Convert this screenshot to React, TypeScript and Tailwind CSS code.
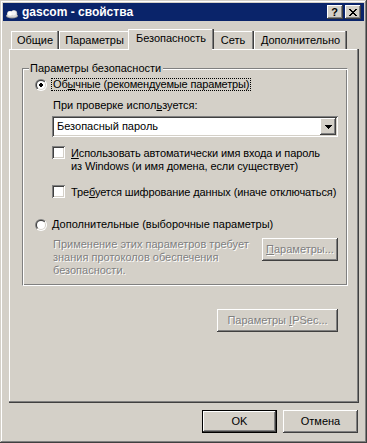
import React from "react";

const RAISED =
  "shadow-[inset_-1px_-1px_#404040,inset_1px_1px_#ffffff,inset_-2px_-2px_#808080,inset_2px_2px_#d4d0c8]";
const SUNKEN =
  "shadow-[inset_1px_1px_#808080,inset_-1px_-1px_#ffffff,inset_2px_2px_#404040,inset_-2px_-2px_#d4d0c8]";
const DISABLED = "text-[#808080] [text-shadow:1px_1px_0_#ffffff]";

const TABS = [
  { label: "Общие", w: "w-[48px]" },
  { label: "Параметры", w: "w-[71px]" },
  { label: "Безопасность", w: "w-[86px]", active: true },
  { label: "Сеть", w: "w-[42px]" },
  { label: "Дополнительно", w: "w-[93px]" },
];

function CloudIcon() {
  return (
    <svg width="16" height="16" viewBox="0 0 16 16" className="shrink-0">
      <ellipse cx="8" cy="12" rx="6" ry="2.5" fill="#8c8c8c" />
      <circle cx="6" cy="10" r="3" fill="#c8c8c8" />
      <circle cx="10" cy="9.5" r="3.2" fill="#c8c8c8" />
      <ellipse cx="8" cy="11.5" rx="5.5" ry="2" fill="#d8d8d8" />
      <circle cx="6" cy="9.5" r="2.3" fill="#ffffff" />
      <circle cx="9.7" cy="9" r="2.4" fill="#f4f4f4" />
    </svg>
  );
}

function CloseIcon() {
  const rows = [
    [0, 1, 6, 7],
    [1, 2, 5, 6],
    [2, 3, 4, 5],
    [3, 4],
    [2, 3, 4, 5],
    [1, 2, 5, 6],
    [0, 1, 6, 7],
  ];
  return (
    <svg width="8" height="7" viewBox="0 0 8 7" shapeRendering="crispEdges">
      {rows.map((cols, y) =>
        cols.map((x) => <rect key={y + "-" + x} x={x} y={y} width="1" height="1" fill="#000" />)
      )}
    </svg>
  );
}

function Radio({ checked }: { checked?: boolean }) {
  return (
    <svg width="12" height="12" viewBox="0 0 12 12" className="shrink-0">
      <defs>
        <linearGradient id="radio-outer" x1="0" y1="0" x2="1" y2="1">
          <stop offset="0.5" stopColor="#808080" />
          <stop offset="0.5" stopColor="#ffffff" />
        </linearGradient>
        <linearGradient id="radio-inner" x1="0" y1="0" x2="1" y2="1">
          <stop offset="0.5" stopColor="#404040" />
          <stop offset="0.5" stopColor="#d4d0c8" />
        </linearGradient>
      </defs>
      <circle cx="6" cy="6" r="6" fill="url(#radio-outer)" />
      <circle cx="6" cy="6" r="5" fill="url(#radio-inner)" />
      <circle cx="6" cy="6" r="4" fill="#ffffff" />
      {checked && (
        <g shapeRendering="crispEdges">
          <rect x="5" y="4" width="2" height="4" fill="#000" />
          <rect x="4" y="5" width="4" height="2" fill="#000" />
        </g>
      )}
    </svg>
  );
}

function Checkbox() {
  return <span className={`block w-[13px] h-[13px] shrink-0 bg-white ${SUNKEN}`} />;
}

function Button({
  children,
  isDefault,
  disabled,
  className = "",
}: {
  children: React.ReactNode;
  isDefault?: boolean;
  disabled?: boolean;
  className?: string;
}) {
  const bevel = isDefault
    ? "shadow-[inset_0_0_0_1px_#000000,inset_-2px_-2px_#404040,inset_2px_2px_#ffffff,inset_-3px_-3px_#808080]"
    : RAISED;
  return (
    <div
      className={`h-[23px] flex items-center justify-center bg-[#d4d0c8] ${bevel} ${
        disabled ? DISABLED : "text-black"
      } ${className}`}
    >
      {children}
    </div>
  );
}

function TitleBar() {
  return (
    <div className="h-[18px] bg-[#0a246a] flex items-center pl-[1px] pr-[3px]">
      <CloudIcon />
      <span className="ml-[2px] text-white font-bold text-[12px]">gascom - свойства</span>
      <div className="ml-auto flex gap-[2px]">
        <div className={`w-[16px] h-[14px] bg-[#d4d0c8] flex items-center justify-center ${RAISED}`}>
          <span className="font-bold text-[11px] leading-[11px] pr-[1px]">?</span>
        </div>
        <div className={`w-[16px] h-[14px] bg-[#d4d0c8] flex items-center justify-center ${RAISED}`}>
          <CloseIcon />
        </div>
      </div>
    </div>
  );
}

function Tabs() {
  return (
    <div className="flex items-end h-[20px] pl-[2px]">
      {TABS.map((t) =>
        t.active ? (
          <div
            key={t.label}
            className={`relative z-10 -mx-[2px] h-[20px] ${t.w} bg-[#d4d0c8] flex items-center justify-center pb-[1px] shadow-[inset_-1px_0_#404040,inset_-2px_0_#808080,inset_1px_1px_#ffffff]`}
          >
            {t.label}
            <span className="absolute left-[1px] right-[2px] -bottom-[1px] h-[1px] bg-[#d4d0c8]" />
          </div>
        ) : (
          <div
            key={t.label}
            className={`h-[18px] ${t.w} flex items-center justify-center shadow-[inset_-1px_0_#404040,inset_-2px_0_#808080,inset_1px_1px_#ffffff]`}
          >
            {t.label}
          </div>
        )
      )}
    </div>
  );
}

function SecurityGroup() {
  return (
    <div className="relative w-[326px] h-[218px] border border-[#808080] border-r-white border-b-white shadow-[inset_1px_1px_#ffffff,inset_-1px_-1px_#808080]">
      <span className="absolute left-[6px] -top-[7px] bg-[#d4d0c8] pl-[1px] pr-[2px]">
        Параметры безопасности
      </span>
      <div className="flex flex-col pl-[12px] pt-[9px]">
        <div className="flex items-center h-[13px]">
          <Radio checked />
          <span className="ml-[4px] border border-dotted border-black px-[1px] leading-[11px] tracking-[-0.15px]">
            Об<u>ы</u>чные (рекомендуемые параметры)
          </span>
        </div>
        <div className="mt-[8px] pl-[18px]">
          При проверке испол<u>ь</u>зуется:
        </div>
        <div className={`mt-[4px] ml-[17px] w-[286px] h-[21px] bg-white flex items-center pl-[5px] pr-[2px] ${SUNKEN}`}>
          <span className="flex-1">Безопасный пароль</span>
          <div className={`w-[16px] h-[17px] bg-[#d4d0c8] flex items-center justify-center ${RAISED}`}>
            <svg width="7" height="4" viewBox="0 0 7 4" shapeRendering="crispEdges">
              <path d="M0 0H7V1H6V2H5V3H4V4H3V3H2V2H1V1H0Z" fill="#000" />
            </svg>
          </div>
        </div>
        <div className="mt-[9px] ml-[17px] flex">
          <Checkbox />
          <span className="ml-[6px] mt-[1px] whitespace-nowrap tracking-[-0.1px]">
            <u>И</u>спользовать автоматически имя входа и пароль
            <br />
            из Windows (и имя домена, если существует)
          </span>
        </div>
        <div className="mt-[12px] ml-[17px] flex">
          <Checkbox />
          <span className="ml-[6px] mt-[1px] whitespace-nowrap tracking-[-0.1px]">
            Тре<u>б</u>уется шифрование данных (иначе отключаться)
          </span>
        </div>
        <div className="mt-[19px] flex items-center h-[13px]">
          <Radio />
          <span className="ml-[5px]">
            <u>Д</u>ополнительные (выборочные параметры)
          </span>
        </div>
        <div className="mt-[7px] flex">
          <span className={`ml-[18px] w-[209px] ${DISABLED}`}>
            Применение этих параметров требует
            <br />
            знания протоколов обеспечения
            <br />
            безопасности.
          </span>
          <Button disabled className="w-[76px]">
            <span>
              <u>П</u>араметры...
            </span>
          </Button>
        </div>
      </div>
    </div>
  );
}

export default function App() {
  return (
    <div className="w-[367px] h-[443px] bg-[#d4d0c8] p-[3px] flex flex-col shadow-[inset_-1px_-1px_#404040,inset_1px_1px_#d4d0c8,inset_-2px_-2px_#808080,inset_2px_2px_#ffffff] font-['Liberation_Sans',Arial,sans-serif] text-[11px] leading-[13px] text-black select-none">
      <TitleBar />
      <div className="flex flex-col pl-[6px] pt-[8px]">
        <Tabs />
        <div className="w-[350px] h-[354px] bg-[#d4d0c8] pl-[13px] pt-[19px] shadow-[inset_-1px_-1px_#404040,inset_-2px_-2px_#808080,inset_1px_1px_#ffffff]">
          <SecurityGroup />
          <div className="w-[326px] flex justify-end pr-[10px] mt-[23px]">
            <Button disabled className="w-[121px]">
              <span>
                Параметры <u>I</u>PSec...
              </span>
            </Button>
          </div>
        </div>
        <div className="w-[350px] flex justify-end gap-[6px] pr-[1px] mt-[7px]">
          <Button isDefault className="w-[75px]">
            OK
          </Button>
          <Button className="w-[75px]">Отмена</Button>
        </div>
      </div>
    </div>
  );
}
